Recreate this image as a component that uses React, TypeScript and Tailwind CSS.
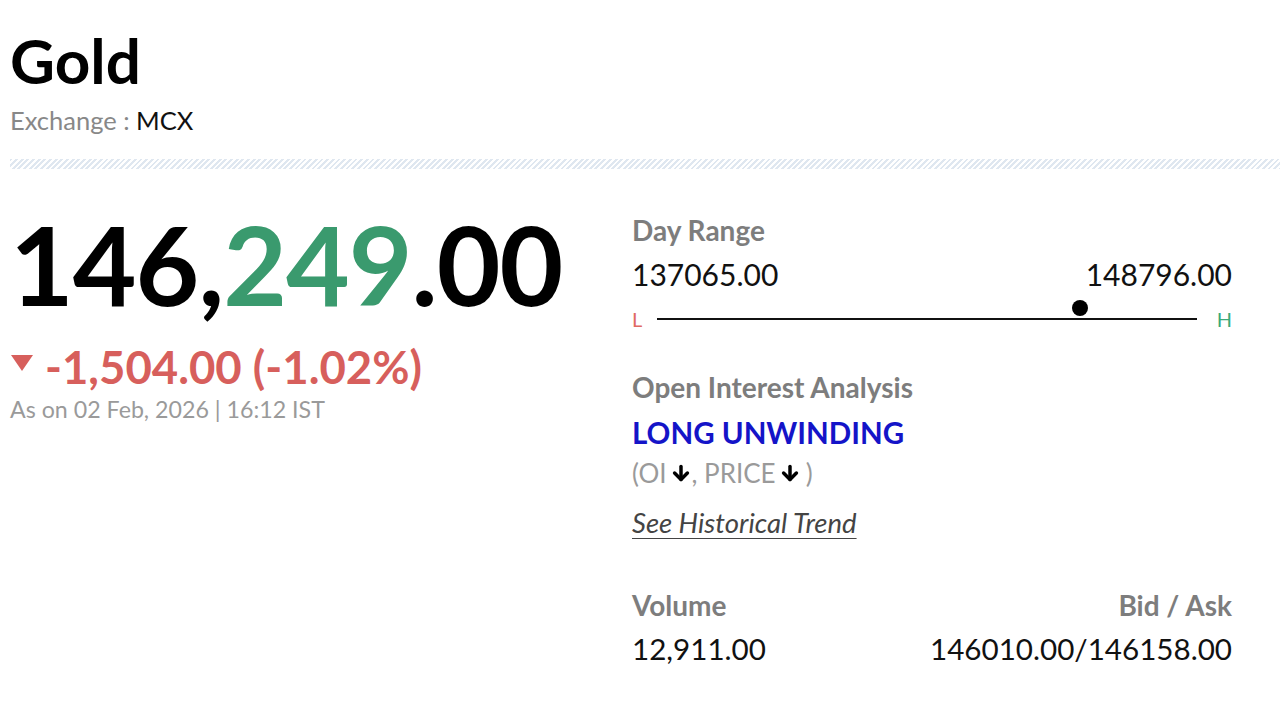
import { ArrowDown } from "lucide-react";

const font = { fontFamily: "Lato, 'Noto Sans', sans-serif" };

function Stat({ label, value, align = "left" }: { label: string; value: string; align?: "left" | "right" }) {
  return (
    <div className={align === "right" ? "text-right" : ""}>
      <div className="text-[28px] leading-none font-bold text-[#7d7d7d]">{label}</div>
      <div className="mt-[15px] text-[29.6px] leading-none text-[#111]">{value}</div>
    </div>
  );
}

export default function App() {
  // position of current price within day range
  const low = 137065;
  const high = 148796;
  const ltp = 146249;
  const pct = ((ltp - low) / (high - low)) * 100;

  return (
    <div className="w-[1280px] h-[720px] bg-white overflow-hidden pl-[10px]" style={font}>
      <h1 className="pt-[29px] text-[62px] leading-none font-bold text-black">Gold</h1>
      <div className="mt-[17px] text-[25.5px] leading-none text-[#888]">
        Exchange : <span className="text-[#111]">MCX</span>
      </div>
      <div className="mt-[25px] h-[10px] bg-[repeating-linear-gradient(135deg,#dfe7f0_0px,#dfe7f0_2px,#ffffff_2px,#ffffff_4px)]" />

      <div className="flex">
        <div className="w-[622px]">
          <div className="mt-[39px] text-[110px] leading-none font-bold text-black tracking-[-1px]">
            146,<span className="text-[#3a9a6e]">249</span>.00
          </div>
          <div className="mt-[26px] flex items-center text-[45.5px] leading-none font-bold text-[#d75f5c]">
            <span className="mr-[12px] ml-[1px] -mt-[6px] w-0 h-0 border-l-[11px] border-r-[11px] border-t-[16px] border-l-transparent border-r-transparent border-t-[#d75f5c]" />
            -1,504.00 (-1.02%)
          </div>
          <div className="mt-[9px] text-[23.2px] leading-none text-[#9a9a9a]">As on 02 Feb, 2026 | 16:12 IST</div>
        </div>

        <div className="w-[600px]">
          <div className="mt-[47px] text-[28px] leading-none font-bold text-[#7d7d7d]">Day Range</div>
          <div className="mt-[15px] flex justify-between text-[30px] leading-none text-[#111]">
            <span>137065.00</span>
            <span>148796.00</span>
          </div>
          <div className="mt-[20px] flex items-center">
            <span className="w-[25px] text-[20px] leading-none text-[#e06a63]">L</span>
            <div className="relative flex-1 h-[2px] bg-[#111]">
              <span
                className="absolute top-[-18px] w-[16px] h-[16px] rounded-full bg-black -translate-x-1/2"
                style={{ left: `${pct}%` }}
              />
            </div>
            <span className="w-[35px] text-right text-[20px] leading-none text-[#3aaa7a]">H</span>
          </div>

          <div className="mt-[44px] text-[28px] leading-none font-bold text-[#7d7d7d]">Open Interest Analysis</div>
          <div className="mt-[17px] text-[29.5px] leading-none font-bold text-[#1414c8]">LONG UNWINDING</div>
          <div className="mt-[13px] flex items-center text-[26px] leading-none text-[#9a9a9a]">
            (OI
            <ArrowDown className="w-[22px] h-[22px] text-black ml-[3px]" strokeWidth={3.8} />, PRICE
            <ArrowDown className="w-[22px] h-[22px] text-black ml-[3px] mr-[5px]" strokeWidth={3.8} />)
          </div>
          <div className="mt-[23px] text-[27.5px] leading-none italic underline underline-offset-[5px] decoration-[1px] text-[#444]">
            See Historical Trend
          </div>

          <div className="mt-[54px] flex justify-between">
            <Stat label="Volume" value="12,911.00" />
            <Stat label="Bid / Ask" value="146010.00/146158.00" align="right" />
          </div>
        </div>
      </div>
    </div>
  );
}
